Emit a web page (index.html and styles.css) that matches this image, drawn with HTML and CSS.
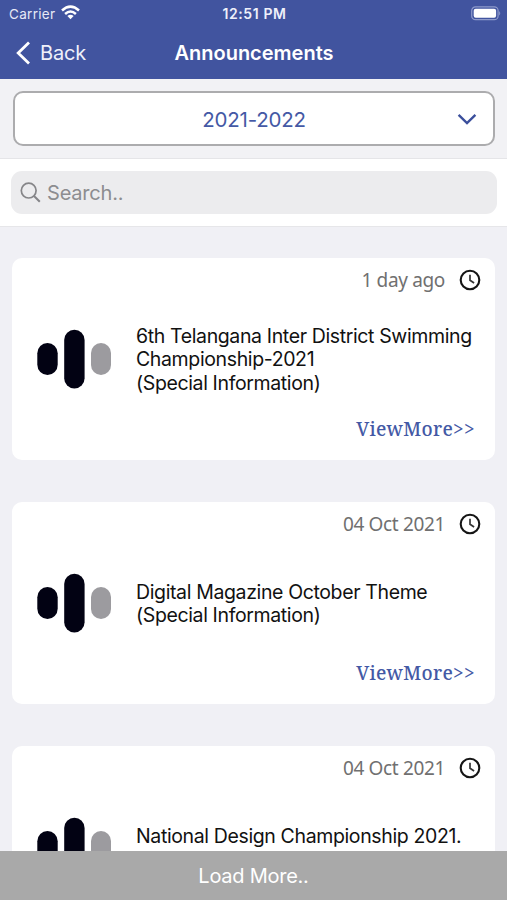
FILE: index.html
```html
<!DOCTYPE html>
<html lang="en">
<head>
<meta charset="utf-8">
<title>Announcements</title>
<link rel="stylesheet" href="styles.css">
</head>
<body>
<svg width="0" height="0" class="defs" aria-hidden="true">
  <symbol id="clock" viewBox="0 0 22 22"><circle cx="11" cy="11" r="9.3" fill="none" stroke="#151515" stroke-width="2.1"/><path d="M11 5.8V11.3L15.1 14" fill="none" stroke="#333" stroke-width="1.7"/></symbol>
  <symbol id="bars" viewBox="0 0 76 60"><rect x="1.3" y="14" width="20.4" height="32" rx="10.2" fill="#020213"/><rect x="28.2" y="0.7" width="20.4" height="58.8" rx="10.2" fill="#020213"/><rect x="55" y="14" width="20" height="32" rx="10" fill="#9c9b9f"/></symbol>
</svg>
<div class="app">
  <header class="header">
    <div class="status">
      <div class="side"><span class="carrier">Carrier</span>
        <svg class="wifi" width="19" height="15" viewBox="0 0 19 15"><g fill="none" stroke="#fff" stroke-width="2.5"><path d="M1 5.5Q9.5-2.2 18 5.5"/><path d="M4.1 9Q9.5 4 14.9 9"/></g><path d="M6.4 11Q9.5 8.5 12.6 11L9.5 14.2Z" fill="#fff"/></svg>
      </div>
      <span class="time">12:51 PM</span>
      <div class="side end">
        <svg width="31" height="15" viewBox="0 0 31 15"><rect x=".7" y=".9" width="26.4" height="12.8" rx="3.8" fill="none" stroke="#8e9acb" stroke-width="1.2"/><rect x="2.7" y="2.8" width="22.4" height="9" rx="2" fill="#fff"/><path d="M28.2 5Q30.3 7.3 28.2 9.6Z" fill="#8e9acb"/></svg>
      </div>
    </div>
    <div class="nav">
      <div class="back"><svg width="15" height="24" viewBox="0 0 15 24"><path d="M13 1.5L2.2 12L13 22.5" fill="none" stroke="#fff" stroke-width="2.8"/></svg><span>Back</span></div>
      <h1>Announcements</h1>
    </div>
  </header>
  <div class="filter"><div class="select"><span>2021-2022</span><svg class="chevron" width="20" height="12" viewBox="0 0 20 12"><path d="M1.6 1.8L10 10L18.4 1.8" fill="none" stroke="#3b4f9c" stroke-width="2.4"/></svg></div></div>
  <div class="search"><div class="field"><svg width="21" height="21" viewBox="0 0 21 21"><g fill="none" stroke="#858588" stroke-width="1.7"><circle cx="8.7" cy="8.6" r="7.4"/><path d="M14 14L19.8 19.8" stroke-width="2"/></g></svg><span>Search..</span></div></div>
  <main class="list">
    <article class="card">
      <div class="date"><span>1 day ago</span><svg width="22" height="22"><use href="#clock"/></svg></div>
      <div class="body"><svg width="76" height="60"><use href="#bars"/></svg><p>6th Telangana Inter District Swimming<br>Championship-2021<br>(Special Information)</p></div>
      <div class="more">ViewMore&gt;&gt;</div>
    </article>
    <article class="card">
      <div class="date"><span>04 Oct 2021</span><svg width="22" height="22"><use href="#clock"/></svg></div>
      <div class="body"><svg width="76" height="60"><use href="#bars"/></svg><p>Digital Magazine October Theme<br>(Special Information)</p></div>
      <div class="more">ViewMore&gt;&gt;</div>
    </article>
    <article class="card">
      <div class="date"><span>04 Oct 2021</span><svg width="22" height="22"><use href="#clock"/></svg></div>
      <div class="body"><svg width="76" height="60"><use href="#bars"/></svg><p>National Design Championship 2021.<br>(Special Information)</p></div>
    </article>
  </main>
  <footer class="load">Load More..</footer>
</div>
</body>
</html>
```
FILE: styles.css
```css
* { box-sizing: border-box; }
body { margin: 0; font-family: Inter, "Liberation Sans", sans-serif; }
.defs { position: absolute; }
.app { width: 507px; height: 900px; overflow: hidden; display: flex; flex-direction: column; background: #f0f0f5; }
.header { flex: none; height: 79px; background: #41549f; color: #fff; }
.status { height: 27px; display: flex; align-items: center; padding: 0 7px 0 9px; }
.side { flex: 1; display: flex; align-items: center; gap: 6px; }
.end { justify-content: flex-end; margin-right: -2px; }
.carrier { font-size: 13.5px; letter-spacing: .3px; color: #e6e9f6; }
.wifi { margin-top: -2px; }
.time { font-size: 14px; font-weight: 600; letter-spacing: .6px; margin-right: 2px; color: #eef0fa; }
.nav { height: 50px; display: grid; grid-template-columns: 1fr auto 1fr; align-items: center; padding-top: 1px; }
.back { display: flex; align-items: center; gap: 9px; padding-left: 16px; font-size: 20px; letter-spacing: -.2px; color: #eef0fa; }
.nav h1 { margin: 0; font-size: 20px; font-weight: 600; line-height: 24px; padding-left: 1px; }
.filter { flex: none; height: 80px; padding: 12px 12px 0 13px; background: #f2f2f5; border-bottom: 1px solid #e5e5e8; }
.select { height: 55px; border: 2px solid #acacae; border-radius: 10px; background: #fff; display: grid; grid-template-columns: 1fr auto 1fr; align-items: center; color: #4459a5; font-size: 20.5px; letter-spacing: -.2px; }
.select span { grid-column: 2; padding-top: 1px; }
.chevron { justify-self: end; margin-right: 16px; }
.search { flex: none; height: 68px; padding: 12px 10px 0 11px; background: #fff; border-bottom: 1px solid #e6e6e9; }
.field { height: 43px; border-radius: 11px; background: #ececee; display: flex; align-items: center; gap: 6px; padding-left: 9px; color: #8d8d90; font-size: 20px; letter-spacing: -.2px; }
.field span { padding-top: 1px; }
.list { flex: 1; min-height: 0; overflow: hidden; padding: 31px 12px 0; display: flex; flex-direction: column; gap: 42px; }
.card { flex: none; height: 202px; border-radius: 10px; background: #fff; display: flex; flex-direction: column; }
.date { height: 43px; display: flex; justify-content: flex-end; align-items: center; gap: 14px; padding-right: 14px; font: 19px "Noto Sans", sans-serif; letter-spacing: -.35px; color: #707070; }
.body { height: 116px; display: flex; align-items: center; padding-left: 24px; gap: 24px; }
.body p { margin: 0; padding-top: 2px; font-size: 19.5px; letter-spacing: -.37px; line-height: 23.2px; color: #111; white-space: nowrap; }
.more { height: 24px; line-height: 24px; padding-right: 20px; text-align: right; font-family: "Noto Serif", "DejaVu Serif", serif; font-size: 19px; font-weight: 500; letter-spacing: .3px; color: #4459a5; }
.load { flex: none; height: 49px; background: #a9a9a9; color: #fff; font-size: 20px; letter-spacing: -.25px; text-align: center; line-height: 51px; }
```
